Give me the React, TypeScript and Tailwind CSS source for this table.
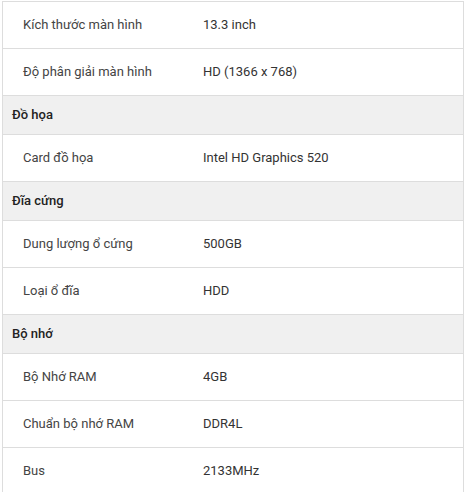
import React from "react";

type Row = { type: "header"; title: string } | { type: "row"; label: string; value: string };

const rows: Row[] = [
  { type: "row", label: "Kích thước màn hình", value: "13.3 inch" },
  { type: "row", label: "Độ phân giải màn hình", value: "HD (1366 x 768)" },
  { type: "header", title: "Đồ họa" },
  { type: "row", label: "Card đồ họa", value: "Intel HD Graphics 520" },
  { type: "header", title: "Đĩa cứng" },
  { type: "row", label: "Dung lượng ổ cứng", value: "500GB" },
  { type: "row", label: "Loại ổ đĩa", value: "HDD" },
  { type: "header", title: "Bộ nhớ" },
  { type: "row", label: "Bộ Nhớ RAM", value: "4GB" },
  { type: "row", label: "Chuẩn bộ nhớ RAM", value: "DDR4L" },
  { type: "row", label: "Bus", value: "2133MHz" },
];

export default function App() {
  return (
    <div className="w-[468px] h-[492px] overflow-hidden bg-white pt-[1px] pl-[2px]" style={{ fontFamily: "Roboto, 'Liberation Sans', sans-serif" }}>
      <div className="w-[462px] border-l border-r border-t border-[#dddddd] text-[13px]">
        {rows.map((r, i) =>
          r.type === "header" ? (
            <div key={i} className="h-[39px] border-b border-[#dddddd] bg-[#f0f0f0] flex items-center pl-[9px] font-medium text-[#222222]">
              {r.title}
            </div>
          ) : (
            <div key={i} className="h-[47px] border-b border-[#dddddd] flex items-center">
              <div className="w-[200px] pl-[20px] text-[#444444]">{r.label}</div>
              <div className="text-[#333333]">{r.value}</div>
            </div>
          )
        )}
      </div>
    </div>
  );
}
